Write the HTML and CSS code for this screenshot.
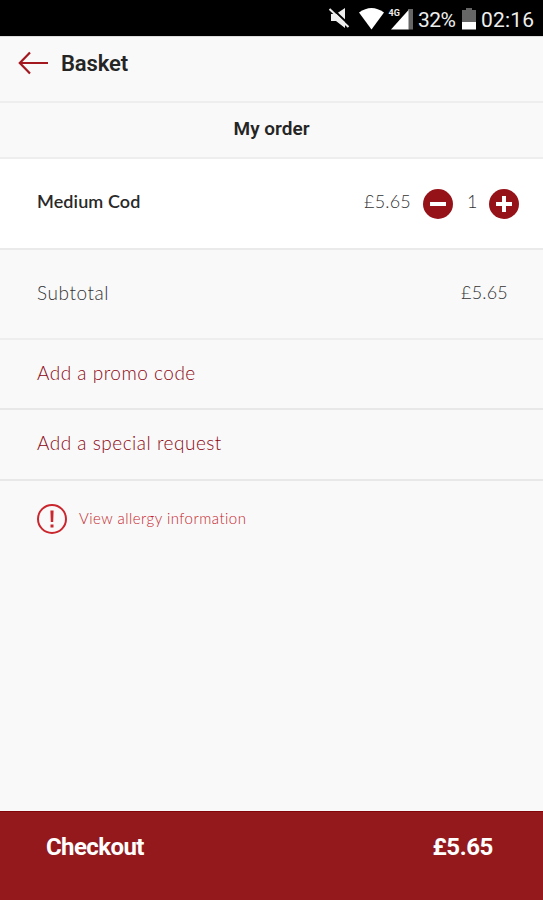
FILE: index.html
```html
<!DOCTYPE html>
<html lang="en">
<head>
<meta charset="utf-8">
<title>Basket</title>
<link rel="stylesheet" href="styles.css">
</head>
<body>
<div class="screen">
  <div class="status">
    <svg class="status-icons" width="90" height="36" viewBox="0 0 90 36" aria-hidden="true">
      <path fill="#eee" d="M6 14h5l9-6v20l-9-7H6z"/>
      <path stroke="#000" stroke-width="2" d="M6 7.500l19 18"/>
      <path stroke="#eee" stroke-width="2" d="M4.500 9l19 18"/>
      <path fill="#fff" d="M34 12.500Q46.500 3.500 59 12.500L46.500 29.500z"/>
      <path fill="#666" d="M83 9h5v20.500h-5z"/>
      <path fill="#fff" d="M66 29.500L83.500 10v19.500z"/>
      <text class="network" x="63.500" y="15.500">4G</text>
    </svg>
    <span class="percent">32%</span>
    <svg class="battery" width="16" height="36" viewBox="0 0 16 36" aria-hidden="true">
      <path fill="#666" d="M1 10h4V8h6v2h4v12H1z"/>
      <path fill="#fff" d="M1 22h14v7.500H1z"/>
    </svg>
    <span class="clock">02:16</span>
  </div>
  <header class="header">
    <svg class="back" width="30" height="24" viewBox="0 0 30 24" fill="none" stroke="#a3171e" stroke-width="2.200" aria-hidden="true">
      <path d="M30 12H2M12 1.500L1.800 12L12 22.500"/>
    </svg>
    <h1 class="title">Basket</h1>
  </header>
  <h2 class="section-title">My order</h2>
  <div class="item">
    <span class="item-name">Medium Cod</span>
    <span class="item-price">£5.65</span>
    <svg class="round" width="30" height="30" viewBox="0 0 30 30" aria-label="Remove one">
      <circle cx="15" cy="15" r="15" fill="#961219"/>
      <path stroke="#fff" stroke-width="4" d="M7 15h16"/>
    </svg>
    <span class="quantity">1</span>
    <svg class="round" width="30" height="30" viewBox="0 0 30 30" aria-label="Add one">
      <circle cx="15" cy="15" r="15" fill="#961219"/>
      <path stroke="#fff" stroke-width="4" d="M7 15h16M15 7v16"/>
    </svg>
  </div>
  <div class="subtotal"><span class="subtotal-label">Subtotal</span><span class="subtotal-price">£5.65</span></div>
  <div class="action"><span class="promo">Add a promo code</span></div>
  <div class="action request-row"><span class="request">Add a special request</span></div>
  <div class="allergy">
    <svg width="30" height="30" viewBox="0 0 30 30" aria-hidden="true">
      <circle cx="15" cy="15" r="14" fill="none" stroke="#c9272d" stroke-width="2"/>
      <path fill="#c9272d" d="M13.400 6.500h3.200l-.4 11.500h-2.400zM13.500 20.500h3v3h-3z"/>
    </svg>
    <span class="allergy-text">View allergy information</span>
  </div>
  <footer class="checkout"><span class="checkout-label">Checkout</span><span class="checkout-price">£5.65</span></footer>
</div>
</body>
</html>
```
FILE: styles.css
```css
* { box-sizing: border-box; }
body { margin: 0; background: #f9f9f9; font-family: Lato, "Open Sans", sans-serif; font-variant-ligatures: none; }
.screen { width: 543px; height: 900px; display: flex; flex-direction: column; }
.screen > * { flex-shrink: 0; }
.status { height: 36px; background: #000; color: #eee; display: flex; align-items: center; padding-left: 325px; font: 21px/36px Roboto, sans-serif; white-space: nowrap; }
.status-icons, .battery { flex: none; }
.network { font: bold 9px Roboto, sans-serif; fill: #eee; }
.percent { width: 42px; margin-left: 3px; padding-top: 3px; letter-spacing: -0.5px; }
.battery { margin-left: 1px; }
.clock { margin-left: 4px; padding-top: 3px; letter-spacing: 0.2px; }
.header { height: 67px; border-top: 1px solid #ddd; border-bottom: 2px solid #eee; display: flex; align-items: center; padding: 0 0 12px 18px; }
.title { margin: 0 0 0 13px; font: 600 22px/28px Roboto, sans-serif; color: #252525; letter-spacing: -0.1px; padding-top: 2px; }
.section-title { margin: 0; height: 56px; border-bottom: 2px solid #eee; text-align: center; font: 600 19px/51px Roboto, sans-serif; color: #252525; }
.item { height: 91px; background: #fff; border-bottom: 2px solid #eaeaea; display: flex; align-items: center; padding: 0 24px 0 37px; font-size: 18px; color: #555; }
.item-name { flex: 1; font-weight: 600; color: #292929; letter-spacing: 0.1px; }
.item-name, .item-price, .quantity { padding-bottom: 6px; }
.item-price, .quantity { font-weight: 300; color: #333; }
.item-price { letter-spacing: 0.2px; }
.round { margin: 0 0 0 12px; }
.quantity { width: 10px; margin-left: 14px; }
.subtotal { height: 90px; border-bottom: 2px solid #eee; display: flex; justify-content: space-between; align-items: center; padding: 0 35px 4px 37px; font-size: 19px; font-weight: 300; color: #333; }
.subtotal-label { letter-spacing: 0.55px; }
.subtotal-price { font-size: 18px; letter-spacing: 0.2px; }
.action { height: 70px; border-bottom: 2px solid #e8e8e8; display: flex; align-items: center; padding: 0 0 4px 37px; font-size: 19px; font-weight: 300; color: #8d0713; letter-spacing: 0.5px; }
.request-row { height: 71px; }
.allergy { flex: 1; display: flex; align-items: flex-start; padding: 23px 0 0 37px; gap: 12px; font-size: 15px; font-weight: 300; line-height: 28px; color: #c51f2c; letter-spacing: 0.47px; }
.checkout { height: 89px; background: #93191c; border-top: 1px solid #820609; color: #fff; display: flex; justify-content: space-between; align-items: center; padding: 0 50px 18px 46px; font: bold 24px/30px Roboto, sans-serif; }
.checkout-label { letter-spacing: -0.6px; }
.checkout-price { letter-spacing: -0.4px; }
```
